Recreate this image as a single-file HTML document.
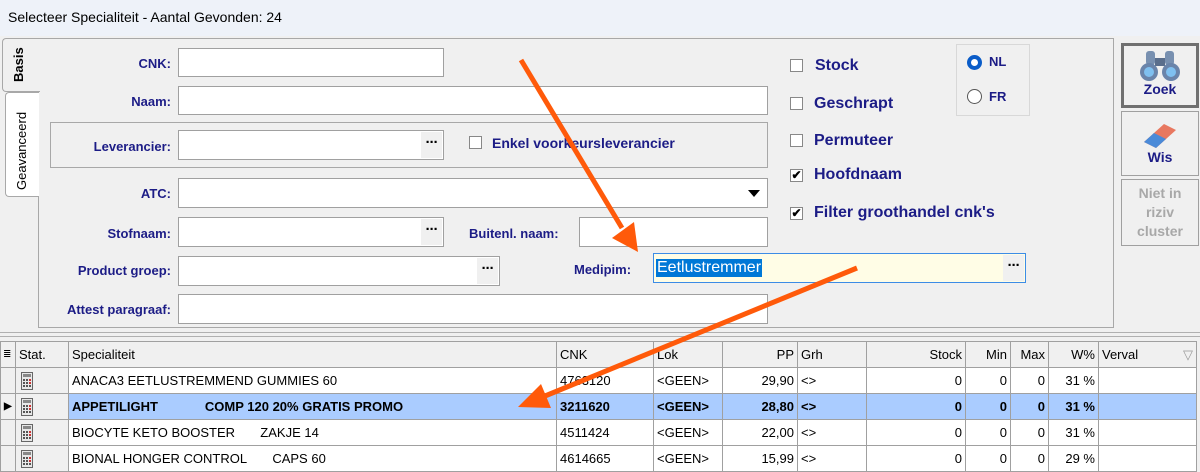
<!DOCTYPE html><html><head><meta charset="utf-8"><style>
body{margin:0;width:1200px;height:468px;overflow:hidden;background:#f0f0f0;font-family:"Liberation Sans",Arial,sans-serif;position:relative}
.a{position:absolute}
.in{position:absolute;background:#fff;border:1px solid #a0a0a0;box-sizing:border-box}
.lb{position:absolute;color:#1c1c86;font-weight:bold;font-size:13px;text-align:right;width:160px}
.dots{position:absolute;right:1px;top:1px;bottom:1px;width:21px;background:#f0f0f0;font-weight:bold;font-size:15px;text-align:center;line-height:22px;letter-spacing:-1px}
.cb{position:absolute;width:13px;height:13px;border:1px solid #888;background:#fff;box-sizing:border-box;font-size:12px;line-height:11px;text-align:center;font-weight:bold}
.ct{position:absolute;color:#1c1c86;font-weight:bold;font-size:16px}
table{border-collapse:collapse;font-size:13px;position:absolute;left:0;top:341px;width:1196px;table-layout:fixed}
td{border:1px solid #a0a0a0;height:25px;padding:0 3px;white-space:nowrap;overflow:hidden}
tr.h td{background:#f0f0f0}
.r{text-align:right}
tr.s td{background:#aaccff;font-weight:bold}
tr.d td{background:#fff}
tr td.g{background:#f0f0f0}
.btn{position:absolute;left:1121px;width:78px;box-sizing:border-box;border:1px solid #a0a0a0;background:#f0f0f0;text-align:center;font-weight:bold;font-size:14px}
</style></head><body>
<div class="a" style="left:0;top:0;width:1200px;height:36px;background:#eef2f9"></div>
<div class="a" style="left:8px;top:9px;font-size:14px">Selecteer Specialiteit - Aantal Gevonden: 24</div>
<div class="a" style="left:38px;top:38px;width:1076px;height:290px;border:1px solid #a8a8a8;box-sizing:border-box"></div>
<div class="a" style="left:2px;top:38px;width:37px;height:52px;border:1px solid #a8a8a8;border-right:none;border-radius:4px 0 0 4px;background:#f0f0f0"></div>
<div class="a" style="left:11px;top:82px;transform:rotate(-90deg);transform-origin:0 0;font-weight:bold;font-size:13px">Basis</div>
<div class="a" style="left:5px;top:92px;width:33px;height:103px;border:1px solid #a8a8a8;border-right:none;border-radius:4px 0 0 4px;background:#fff"></div>
<div class="a" style="left:14px;top:190px;transform:rotate(-90deg);transform-origin:0 0;font-size:13px">Geavanceerd</div>

<div class="lb" style="left:11px;top:56px">CNK:</div><div class="in" style="left:178px;top:48px;width:266px;height:29px"></div>
<div class="lb" style="left:11px;top:94px">Naam:</div><div class="in" style="left:178px;top:86px;width:590px;height:29px"></div>
<div class="a" style="left:50px;top:122px;width:718px;height:46px;border:1px solid #a8a8a8;box-sizing:border-box"></div>
<div class="lb" style="left:11px;top:139px">Leverancier:</div><div class="in" style="left:178px;top:130px;width:266px;height:30px"><div class="dots">···</div></div>
<div class="cb" style="left:469px;top:136px"></div><div class="a" style="left:492px;top:135px;color:#1c1c86;font-weight:bold;font-size:14px">Enkel voorkeursleverancier</div>
<div class="lb" style="left:11px;top:186px">ATC:</div><div class="in" style="left:178px;top:178px;width:590px;height:30px"><div class="a" style="right:7px;top:11px;width:0;height:0;border-left:6px solid transparent;border-right:6px solid transparent;border-top:7px solid #000"></div></div>
<div class="lb" style="left:11px;top:226px">Stofnaam:</div><div class="in" style="left:178px;top:217px;width:266px;height:30px"><div class="dots">···</div></div>
<div class="a" style="left:469px;top:226px;color:#1c1c86;font-weight:bold;font-size:13px">Buitenl. naam:</div><div class="in" style="left:579px;top:217px;width:189px;height:30px"></div>
<div class="lb" style="left:11px;top:263px">Product groep:</div><div class="in" style="left:178px;top:256px;width:322px;height:30px"><div class="dots">···</div></div>
<div class="a" style="left:574px;top:262px;color:#1c1c86;font-weight:bold;font-size:13px">Medipim:</div>
<div class="in" style="left:653px;top:253px;width:373px;height:30px;background:#fffde6;border-color:#3c8ce6"><span class="a" style="left:2px;top:5px;background:#0078d7;color:#fff;font-size:16px;padding:0 1px">Eetlustremmer</span><div class="dots" style="background:#f0f0f0">···</div></div>
<div class="lb" style="left:11px;top:302px">Attest paragraaf:</div><div class="in" style="left:178px;top:294px;width:590px;height:30px"></div>

<div class="cb" style="left:790px;top:59px"></div><div class="ct" style="left:815px;top:57px">Stock</div>
<div class="cb" style="left:790px;top:97px"></div><div class="ct" style="left:814px;top:95px">Geschrapt</div>
<div class="cb" style="left:790px;top:134px"></div><div class="ct" style="left:814px;top:132px">Permuteer</div>
<div class="cb" style="left:790px;top:169px">✔</div><div class="ct" style="left:814px;top:166px">Hoofdnaam</div>
<div class="cb" style="left:790px;top:207px">✔</div><div class="ct" style="left:814px;top:204px">Filter groothandel cnk's</div>
<div class="a" style="left:956px;top:44px;width:74px;height:72px;border:1px solid #d8d8d8;box-sizing:border-box"></div>
<div class="a" style="left:967px;top:55px;width:15px;height:15px;border-radius:50%;border:4px solid #0a5cc8;box-sizing:border-box;background:#fff"></div>
<div class="a" style="left:989px;top:54px;color:#1c1c86;font-weight:bold;font-size:13px">NL</div>
<div class="a" style="left:967px;top:89px;width:15px;height:15px;border-radius:50%;border:1px solid #555;box-sizing:border-box;background:#fff"></div>
<div class="a" style="left:989px;top:89px;color:#1c1c86;font-weight:bold;font-size:13px">FR</div>

<div class="btn" style="top:43px;height:65px;border:3px solid #707070">
<svg width="44" height="34" style="margin-top:2px" viewBox="0 0 44 34"><rect x="8" y="3" width="9" height="14" rx="3" fill="#7890b0"/><rect x="27" y="3" width="9" height="14" rx="3" fill="#7890b0"/><rect x="17" y="10" width="10" height="8" fill="#5a6e8c"/><circle cx="11" cy="24" r="9" fill="#6a84aa"/><circle cx="33" cy="24" r="9" fill="#6a84aa"/><circle cx="11" cy="24" r="5" fill="#7fc0f0"/><circle cx="33" cy="24" r="5" fill="#7fc0f0"/></svg>
<div style="color:#1c1c86;margin-top:-4px">Zoek</div></div>
<div class="btn" style="top:111px;height:65px">
<svg width="44" height="34" style="margin-top:6px" viewBox="0 0 44 34"><path d="M6 24 L26 6 L38 12 L18 30 Z" fill="#e87860"/><path d="M6 24 L16 15 L28 21 L18 30 Z" fill="#4a8ad8"/></svg>
<div style="color:#1c1c86;margin-top:-6px">Wis</div></div>
<div class="btn" style="top:179px;height:67px;color:#a8a8a8;line-height:19px;padding-top:4px">Niet in<br>riziv<br>cluster</div>

<div class="a" style="left:0;top:332px;width:1200px;height:3px;border-top:1px solid #b0b0b0;border-bottom:1px solid #b0b0b0"></div>
<svg width="0" height="0" style="position:absolute"><defs><symbol id="ic" viewBox="0 0 12 18"><rect x="0.5" y="0.5" width="11" height="17" fill="#e8e8e8" stroke="#666"/><rect x="2" y="2" width="8" height="3" fill="#888"/><g fill="#555"><rect x="2" y="7" width="2" height="2"/><rect x="5" y="7" width="2" height="2"/><rect x="8" y="7" width="2" height="2" fill="#c33"/><rect x="2" y="10" width="2" height="2"/><rect x="5" y="10" width="2" height="2"/><rect x="8" y="10" width="2" height="2" fill="#c33"/><rect x="2" y="13" width="2" height="2"/><rect x="5" y="13" width="2" height="2"/><rect x="8" y="13" width="2" height="2"/></g></symbol></defs></svg>
<table>
<colgroup><col style="width:15px"><col style="width:53px"><col style="width:488px"><col style="width:97px"><col style="width:69px"><col style="width:75px"><col style="width:69px"><col style="width:99px"><col style="width:45px"><col style="width:38px"><col style="width:50px"><col style="width:98px"></colgroup>
<tr class="h"><td style="font-size:10px;padding:0 2px">≣</td><td>Stat.</td><td>Specialiteit</td><td>CNK</td><td>Lok</td><td class="r">PP</td><td>Grh</td><td class="r">Stock</td><td class="r">Min</td><td class="r">Max</td><td class="r">W%</td><td>Verval<span style="float:right;color:#999">▽</span></td></tr>
<tr class="d"><td class="g"></td><td class="g"><svg width="12" height="18" style="display:block;margin-left:2px"><use href="#ic"/></svg></td><td>ANACA3 EETLUSTREMMEND GUMMIES 60</td><td>4763120</td><td>&lt;GEEN&gt;</td><td class="r">29,90</td><td>&lt;&gt;</td><td class="r">0</td><td class="r">0</td><td class="r">0</td><td class="r">31 %</td><td></td></tr>
<tr class="s"><td class="g" style="font-size:10px">▶</td><td class="g"><svg width="12" height="18" style="display:block;margin-left:2px"><use href="#ic"/></svg></td><td>APPETILIGHT&nbsp;&nbsp;&nbsp;&nbsp;&nbsp;&nbsp;&nbsp;&nbsp;&nbsp;&nbsp;&nbsp;&nbsp;&nbsp;COMP 120 20% GRATIS PROMO</td><td>3211620</td><td>&lt;GEEN&gt;</td><td class="r">28,80</td><td>&lt;&gt;</td><td class="r">0</td><td class="r">0</td><td class="r">0</td><td class="r">31 %</td><td></td></tr>
<tr class="d"><td class="g"></td><td class="g"><svg width="12" height="18" style="display:block;margin-left:2px"><use href="#ic"/></svg></td><td>BIOCYTE KETO BOOSTER&nbsp;&nbsp;&nbsp;&nbsp;&nbsp;&nbsp;&nbsp;ZAKJE 14</td><td>4511424</td><td>&lt;GEEN&gt;</td><td class="r">22,00</td><td>&lt;&gt;</td><td class="r">0</td><td class="r">0</td><td class="r">0</td><td class="r">31 %</td><td></td></tr>
<tr class="d"><td class="g"></td><td class="g"><svg width="12" height="18" style="display:block;margin-left:2px"><use href="#ic"/></svg></td><td>BIONAL HONGER CONTROL&nbsp;&nbsp;&nbsp;&nbsp;&nbsp;&nbsp;&nbsp;CAPS 60</td><td>4614665</td><td>&lt;GEEN&gt;</td><td class="r">15,99</td><td>&lt;&gt;</td><td class="r">0</td><td class="r">0</td><td class="r">0</td><td class="r">29 %</td><td></td></tr>
</table>
<svg class="a" style="left:0;top:0" width="1200" height="468">
<line x1="521" y1="60" x2="622" y2="228" stroke="#ff5a0a" stroke-width="5"/>
<polygon points="638,252 612,238 634,222" fill="#ff5a0a"/>
<line x1="857" y1="268" x2="545" y2="396" stroke="#ff5a0a" stroke-width="5"/>
<polygon points="518,407 541,384 551,408" fill="#ff5a0a"/>
</svg>
</body></html>
